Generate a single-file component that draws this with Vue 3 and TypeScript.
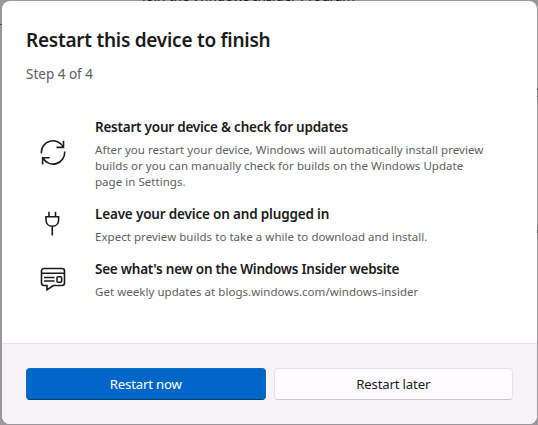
<script setup lang="ts">
type IconName = 'sync' | 'plug' | 'news'

interface Step {
  icon: IconName
  title: string
  lines: string[]
}

const steps: Step[] = [
  {
    icon: 'sync',
    title: 'Restart your device & check for updates',
    lines: [
      'After you restart your device, Windows will automatically install preview',
      'builds or you can manually check for builds on the Windows Update',
      'page in Settings.',
    ],
  },
  {
    icon: 'plug',
    title: 'Leave your device on and plugged in',
    lines: ['Expect preview builds to take a while to download and install.'],
  },
  {
    icon: 'news',
    title: "See what's new on the Windows Insider website",
    lines: ['Get weekly updates at blogs.windows.com/windows-insider'],
  },
]
</script>

<template>
  <div class="backdrop">
    <span class="behind">Join the Windows Insider Program</span>
    <section class="dialog" role="dialog" aria-labelledby="dialog-title">
      <div class="content">
        <h1 id="dialog-title">Restart this device to finish</h1>
        <p class="progress">Step 4 of 4</p>
        <ul class="steps">
          <li v-for="step in steps" :key="step.icon" class="step">
            <svg v-if="step.icon === 'sync'" class="icon" viewBox="0 0 26 26">
              <path d="M1.5 14.3A11.5 11.5 0 0 1 23.2 8M23.5 1.7v6.7h-7M24.6 12.5A11.5 11.5 0 0 1 2.9 18.8M2.6 25.5v-6.7h7" />
            </svg>
            <svg v-else-if="step.icon === 'plug'" class="icon" viewBox="0 0 26 26">
              <path d="M9 1.7v5.1M15.5 1.7v5.1M6 6.8h12.6v3.1c0 3.9-2.6 6.3-6.3 6.3S6 13.8 6 9.9zM12.3 16.2v9.4" />
            </svg>
            <svg v-else class="icon" viewBox="0 0 26 26">
              <path d="M4 3.5h18a2.5 2.5 0 0 1 2.5 2.5v12a2.5 2.5 0 0 1-2.5 2.5h-8.7L7 24.8v-4.3H4A2.5 2.5 0 0 1 1.5 18V6A2.5 2.5 0 0 1 4 3.5zM1.8 8.2h22.4M4 12.5h10.5M4 16h10.5" />
              <rect x="17" y="11.7" width="4.6" height="5.6" rx="1" />
            </svg>
            <div class="text">
              <h2>{{ step.title }}</h2>
              <p class="description">
                <span v-for="line in step.lines" :key="line" class="line">{{ line }}</span>
              </p>
            </div>
          </li>
        </ul>
      </div>
      <footer class="actions">
        <button type="button" class="button primary">Restart now</button>
        <button type="button" class="button">Restart later</button>
      </footer>
    </section>
  </div>
</template>

<style>
body {
  margin: 0;
  overflow: hidden;
}
</style>

<style scoped>
.backdrop {
  position: relative;
  box-sizing: border-box;
  width: 538px;
  height: 425px;
  padding: 1px 1px 1px 2px;
  overflow: hidden;
  background:
    linear-gradient(#484848, #484848) 0 24px / 2px 1px no-repeat,
    linear-gradient(#555, #555) 100% 88px / 1px 2px no-repeat,
    linear-gradient(#555, #555) 100% 96px / 1px 1px no-repeat,
    linear-gradient(#666, #666) 100% 230px / 1px 3px no-repeat,
    #999798;
  font-family: 'Noto Sans', 'Open Sans', sans-serif;
}
.behind {
  position: absolute;
  top: -14px;
  left: 142px;
  font-size: 13.5px;
  line-height: 20px;
  letter-spacing: -0.1px;
  color: #222;
  white-space: nowrap;
}
.dialog {
  position: relative;
  display: flex;
  flex-direction: column;
  height: 423px;
  overflow: hidden;
  border-radius: 8px;
  background: #fff;
  color: #1b1b1b;
}
.content {
  box-sizing: border-box;
  height: 342px;
  padding: 25px 24px 0;
}
h1,
h2,
p,
ul {
  margin: 0;
  padding: 0;
}
h1 {
  font-size: 19px;
  line-height: 28px;
  font-weight: 600;
  letter-spacing: -0.25px;
}
.progress {
  margin-top: 10px;
  font-size: 13.5px;
  line-height: 20px;
  color: #606060;
}
.steps {
  display: flex;
  flex-direction: column;
  gap: 14px;
  margin-top: 33px;
  list-style: none;
}
.step {
  display: flex;
  align-items: center;
  gap: 29px;
}
.icon {
  flex: none;
  width: 26px;
  height: 26px;
  margin: 0 0 3px 14px;
  fill: none;
  stroke: #1b1b1b;
  stroke-width: 1.6;
}
h2 {
  font-size: 13.5px;
  line-height: 20px;
  font-weight: 600;
  letter-spacing: -0.23px;
  white-space: nowrap;
}
.step:nth-child(2) h2 {
  letter-spacing: -0.17px;
}
.description {
  margin-top: 5px;
  font-size: 11.5px;
  line-height: 16px;
  letter-spacing: 0.04px;
  color: #606060;
}
.line {
  display: block;
  white-space: nowrap;
}
.actions {
  display: flex;
  flex: 1;
  gap: 8px;
  align-items: flex-start;
  padding: 24px 24px 0;
  border-top: 1px solid #e5e3e5;
  background: #f7f3f7;
}
.button {
  box-sizing: border-box;
  flex: 1;
  height: 32px;
  padding: 0;
  border: 1px solid #e5e2e5;
  border-bottom-color: #cbc8cb;
  border-radius: 4px;
  background: #fefbfe;
  color: #1b1b1b;
  font: 400 13.2px/20px 'Noto Sans', 'Open Sans', sans-serif;
  letter-spacing: -0.18px;
}
.primary {
  border-color: #0f6dca;
  border-bottom-color: #003e78;
  background: #0067c8;
  color: #fff;
}
</style>
